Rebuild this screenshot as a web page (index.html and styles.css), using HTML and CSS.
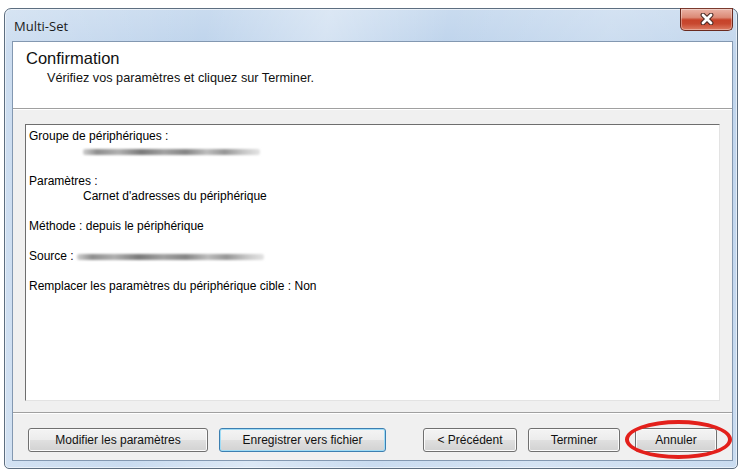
FILE: index.html
```html
<!DOCTYPE html>
<html lang="fr">
<head>
<meta charset="utf-8">
<title>Multi-Set</title>
<link rel="stylesheet" href="styles.css">
</head>
<body>
<div class="window">
  <div class="titlebar">
    <span class="title">Multi-Set</span>
    <div class="close">
      <svg width="14" height="12" viewBox="0 0 14 12">
        <path d="M3 2 L11 10 M11 2 L3 10" stroke="#4a2a24" stroke-width="4.8" stroke-linecap="round" fill="none"/>
        <path d="M3 2 L11 10 M11 2 L3 10" stroke="#ffffff" stroke-width="2.8" stroke-linecap="round" fill="none"/>
      </svg>
    </div>
  </div>
  <div class="client">
    <div class="header">
      <div class="h-title">Confirmation</div>
      <div class="h-desc">Vérifiez vos paramètres et cliquez sur Terminer.</div>
    </div>
    <div class="body">
      <div class="listbox">
        <div class="line">Groupe de périphériques :</div>
        <div class="line indent"><span class="blur blur-a"></span></div>
        <div class="line"></div>
        <div class="line">Paramètres :</div>
        <div class="line indent">Carnet d'adresses du périphérique</div>
        <div class="line"></div>
        <div class="line">Méthode : depuis le périphérique</div>
        <div class="line"></div>
        <div class="line">Source : <span class="blur blur-b"></span></div>
        <div class="line"></div>
        <div class="line">Remplacer les paramètres du périphérique cible : Non</div>
      </div>
    </div>
    <div class="footer">
      <button class="btn btn-modify">Modifier les paramètres</button>
      <button class="btn btn-save default">Enregistrer vers fichier</button>
      <button class="btn btn-prev">&lt; Précédent</button>
      <button class="btn btn-finish">Terminer</button>
      <button class="btn btn-cancel">Annuler</button>
    </div>
  </div>
  <div class="ring"></div>
</div>
</body>
</html>
```

FILE: styles.css
```css
html, body {
  margin: 0;
  padding: 0;
  background: #ffffff;
}

body {
  font-family: "Liberation Sans", Arial, sans-serif;
  font-size: 12px;
  color: #000;
}

.window {
  position: relative;
  box-sizing: border-box;
  width: 734px;
  height: 461px;
  margin: 8px 0 0 4px;
  padding: 0 4px 7px 7px;
  border: 1px solid #5d6e80;
  border-radius: 7px 7px 5px 5px;
  background:
    linear-gradient(100deg, rgba(255,255,255,0.25) 0%, rgba(255,255,255,0) 25%, rgba(255,255,255,0.35) 40%, rgba(255,255,255,0) 55%, rgba(255,255,255,0.2) 75%, rgba(255,255,255,0) 100%),
    linear-gradient(#c9dbef 0%, #bcd2eb 10%, #c3d7ee 60%, #cadcf0 100%);
  box-shadow: inset 0 0 0 1px rgba(255,255,255,0.55);
  display: flex;
  flex-direction: column;
}

.titlebar {
  height: 32px;
  display: flex;
  align-items: center;
  flex: none;
}

.title {
  font-family: "Open Sans", "Noto Sans", sans-serif;
  font-size: 13px;
  color: #1b1b1b;
  margin-left: 2px;
  margin-top: 1px;
}

.close {
  position: absolute;
  left: 675px;
  top: -1px;
  width: 53px;
  height: 23px;
  box-sizing: border-box;
  border: 1px solid #6a2a1f;
  border-top-color: #7a3a2f;
  border-radius: 0 0 5px 5px;
  background: linear-gradient(#eab3a6 0%, #dc8a76 40%, #c7432a 52%, #c8482f 70%, #dc7d64 100%);
  box-shadow: inset 0 0 0 1px rgba(255,255,255,0.35);
  display: flex;
  align-items: center;
  justify-content: center;
}

.close svg {
  display: block;
  margin-top: -1px;
}

.client {
  flex: 1;
  box-sizing: border-box;
  border: 1px solid #8398b1;
  background: #f0f0f0;
  display: flex;
  flex-direction: column;
  min-height: 0;
}

.header {
  height: 60px;
  flex: none;
  background: #ffffff;
  border-bottom: 1px solid #a0a0a0;
  padding: 6px 0 0 13px;
  box-sizing: content-box;
}

.h-title {
  font-size: 16.5px;
  line-height: 20px;
  color: #111;
}

.h-desc {
  font-size: 12.7px;
  line-height: 15px;
  margin-top: 3px;
  padding-left: 21px;
  color: #111;
}

.body {
  flex: 1;
  padding: 15px 12px 11px 12px;
  display: flex;
  flex-direction: column;
  min-height: 0;
  box-shadow: inset 0 1px 0 #ffffff;
}

.listbox {
  flex: 1;
  background: #ffffff;
  border-style: solid;
  border-width: 1px;
  border-color: #6e6e6e #e3e3e3 #e3e3e3 #6e6e6e;
  padding: 4px 3px;
}

.line {
  height: 15px;
  line-height: 15px;
  white-space: nowrap;
  display: flex;
  align-items: center;
}

.indent {
  padding-left: 54px;
}

.blur {
  display: inline-block;
  height: 6px;
  filter: blur(0.9px);
  background: linear-gradient(90deg, #d0d0d0 0%, #8e8e8e 8%, #b0b0b0 20%, #7a7a7a 33%, #a2a2a2 46%, #858585 58%, #bdbdbd 70%, #969696 80%, #c8c8c8 91%, #e4e4e4 100%);
  border-radius: 2px;
}

.blur-a {
  width: 177px;
  margin-top: 1px;
}

.blur-b {
  width: 187px;
  margin-left: 3px;
  margin-top: 1px;
}

.footer {
  flex: none;
  display: flex;
  align-items: flex-start;
  border-top: 1px solid #a0a0a0;
  box-shadow: inset 0 1px 0 #ffffff;
  padding: 15px 15px 8px 15px;
  height: 24px;
}

.btn {
  height: 24px;
  box-sizing: border-box;
  padding: 0;
  margin: 0;
  font-family: "Liberation Sans", Arial, sans-serif;
  font-size: 12px;
  color: #111;
  border: 1px solid #707070;
  border-radius: 3px;
  background: linear-gradient(#f4f4f4 0%, #ececec 48%, #dfdfdf 52%, #d2d2d2 100%);
  box-shadow: inset 0 0 0 1px #fbfbfb;
}

.btn.default {
  border-color: #3c7fb1;
  box-shadow: inset 0 0 0 1px #9fdcf6;
}

.btn-modify { width: 180px; }
.btn-save { width: 167px; margin-left: 11px; }
.btn-prev { width: 94px; margin-left: 37px; }
.btn-finish { width: 92px; margin-left: 11px; }
.btn-cancel { width: 82px; margin-left: 15px; }

.ring {
  position: absolute;
  left: 620px;
  top: 411px;
  width: 107px;
  height: 39px;
  box-sizing: border-box;
  border: 4px solid #e3201b;
  border-radius: 50%;
}
```
